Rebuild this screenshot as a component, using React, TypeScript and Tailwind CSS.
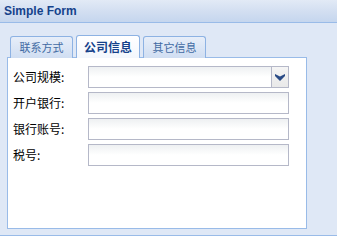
import React from "react";

const tabs = [
  { label: "联系方式", active: false },
  { label: "公司信息", active: true },
  { label: "其它信息", active: false },
];

const fields = [
  { label: "公司规模:", combo: true },
  { label: "开户银行:", combo: false },
  { label: "银行账号:", combo: false },
  { label: "税号:", combo: false },
];

function ChevronDown() {
  return (
    <svg width="10" height="7" viewBox="0 0 10 7">
      <path d="M0 0 L5 2.5 L10 0 L10 2 L5 7 L0 2 Z" fill="#2a4b86" />
    </svg>
  );
}

export default function App() {
  return (
    <div
      className="w-[337px] h-[251px] bg-white overflow-hidden"
      style={{ fontFamily: '"Noto Sans CJK SC", "Liberation Sans", sans-serif' }}
    >
      {/* header */}
      <div className="h-[23px] border-b border-[#99bbe8] bg-gradient-to-b from-[#e2eaf6] via-[#d3dff1] to-[#c5d6ee] px-[4px] flex items-center">
        <span className="text-[12px] font-bold text-[#15428b] font-['Liberation_Sans',sans-serif]">
          Simple Form
        </span>
      </div>

      {/* body */}
      <div className="h-[213px] bg-[#dfe8f6] border-b border-[#99bbe8] pl-[7px] pt-[12px]">
        <div className="flex gap-[3px] pl-[3px] h-[23px] items-end">
          {tabs.map((t) =>
            t.active ? (
              <div
                key={t.label}
                className="relative z-10 h-[23px] w-[64px] rounded-t-[3px] border border-b-0 border-[#8db2e3] bg-gradient-to-b from-[#ffffff] to-[#f3f7fd] flex items-center justify-center text-[12px] font-bold text-[#15428b]"
              >
                {t.label}
              </div>
            ) : (
              <div
                key={t.label}
                className="h-[22px] w-[63px] rounded-t-[3px] border border-b-0 border-[#8db2e3] bg-gradient-to-b from-[#e7eef9] to-[#d0def2] flex items-center justify-center text-[11px] text-[#416aa3]"
              >
                {t.label}
              </div>
            )
          )}
        </div>
        <div className="-mt-px w-[300px] h-[172px] border border-[#99bbe8] bg-white pl-[5px] pt-[8px] flex flex-col gap-[4px]">
          {fields.map((f) => (
            <div key={f.label} className="flex items-center h-[22px]">
              <span className="w-[75px] text-[12px] text-black leading-none">{f.label}</span>
              <div className="w-[201px] h-[22px] border border-[#b5b8c8] bg-gradient-to-b from-[#eef0f2] via-white to-white flex">
                <div className="flex-1" />
                {f.combo && (
                  <div className="w-[17px] border-l border-[#b5b8c8] bg-gradient-to-b from-[#f5f5f5] to-[#e9e9e9] flex items-center justify-center">
                    <ChevronDown />
                  </div>
                )}
              </div>
            </div>
          ))}
        </div>
      </div>
    </div>
  );
}
